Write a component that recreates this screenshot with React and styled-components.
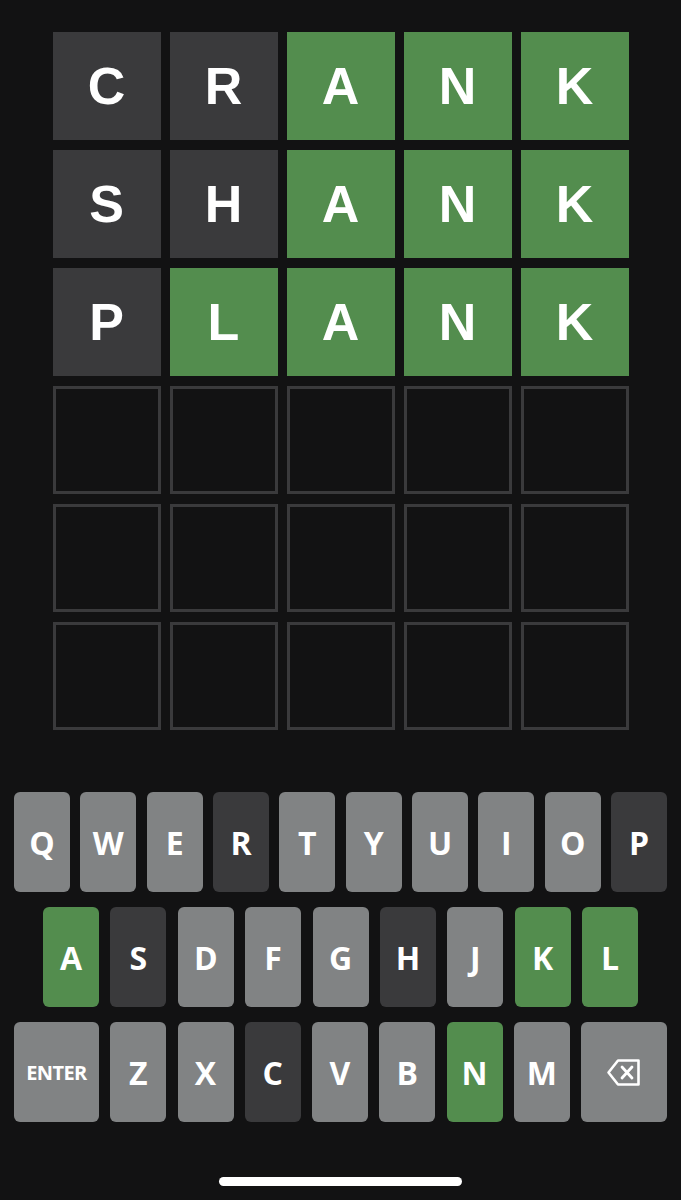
import React from "react";
import styled, { createGlobalStyle, css } from "styled-components";

const Global = createGlobalStyle`
  html, body { margin: 0; padding: 0; background: #121213; }
  body { font-family: "Liberation Sans", Arial, sans-serif; }
  * { box-sizing: border-box; }
`;

const COLORS = {
  correct: "#538d4e",
  absent: "#3a3a3c",
  unused: "#818384",
};

const Screen = styled.div`
  width: 681px;
  height: 1200px;
  background: #121213;
  display: flex;
  flex-direction: column;
  align-items: center;
  overflow: hidden;
`;

const Board = styled.div`
  margin-top: 32px;
  display: grid;
  grid-template-columns: repeat(5, 108px);
  grid-auto-rows: 108px;
  column-gap: 9px;
  row-gap: 10px;
`;

const Tile = styled.div`
  display: flex;
  align-items: center;
  justify-content: center;
  font-family: "Liberation Sans", Arial, sans-serif;
  font-weight: 700;
  font-size: 52px;
  color: #ffffff;
  background: ${(p) => (p.$state ? COLORS[p.$state] : "#121213")};
  ${(p) =>
    !p.$state &&
    css`
      border: 3px solid #3a3a3c;
    `}
`;

const Keyboard = styled.div`
  margin-top: 62px;
  width: 653px;
  display: flex;
  flex-direction: column;
  gap: 15px;
`;

const KeyRow = styled.div`
  display: flex;
  justify-content: space-between;
  padding: 0 ${(p) => p.$inset || 0}px;
`;

const Key = styled.div`
  width: ${(p) => (p.$wide ? p.$wide : 56)}px;
  height: 100px;
  border-radius: 6px;
  background: ${(p) => COLORS[p.$state || "unused"]};
  color: #ffffff;
  display: flex;
  align-items: center;
  justify-content: center;
  font-family: "Open Sans", "Liberation Sans", sans-serif;
  font-weight: 700;
  font-size: ${(p) => (p.$small ? "20px" : "32px")};
  letter-spacing: ${(p) => (p.$small ? "-0.6px" : "0")};
`;

const HomeBar = styled.div`
  margin-top: auto;
  margin-bottom: 14px;
  width: 243px;
  height: 9px;
  border-radius: 5px;
  background: #ffffff;
`;

const guesses = [
  ["CRANK", "aaccc"],
  ["SHANK", "aaccc"],
  ["PLANK", "acccc"],
];

const keyStates = {
  R: "absent", P: "absent", S: "absent", H: "absent", C: "absent",
  A: "correct", K: "correct", L: "correct", N: "correct",
};

const BackspaceIcon = () => (
  <svg width="36" height="29" viewBox="0 0 36 29" fill="none">
    <path
      d="M12 2.5 H32.5 V26.5 H12 L2.5 14.5 Z"
      stroke="#ffffff"
      strokeWidth="2.6"
      strokeLinejoin="round"
    />
    <path
      d="M16 9 L26 20 M26 9 L16 20"
      stroke="#ffffff"
      strokeWidth="2.8"
      strokeLinecap="round"
    />
  </svg>
);

export default function App() {
  const rows = [];
  for (let r = 0; r < 6; r++) {
    const g = guesses[r];
    for (let c = 0; c < 5; c++) {
      const state = g ? (g[1][c] === "c" ? "correct" : "absent") : null;
      rows.push(
        <Tile key={`${r}-${c}`} $state={state}>
          {g ? g[0][c] : ""}
        </Tile>
      );
    }
  }

  const renderKeys = (letters) =>
    letters.split("").map((l) => (
      <Key key={l} $state={keyStates[l]}>
        {l}
      </Key>
    ));

  return (
    <Screen>
      <Global />
      <Board>{rows}</Board>
      <Keyboard>
        <KeyRow>{renderKeys("QWERTYUIOP")}</KeyRow>
        <KeyRow $inset={29}>{renderKeys("ASDFGHJKL")}</KeyRow>
        <KeyRow>
          <Key $wide={85} $small>
            ENTER
          </Key>
          {renderKeys("ZXCVBNM")}
          <Key $wide={86}>
            <BackspaceIcon />
          </Key>
        </KeyRow>
      </Keyboard>
      <HomeBar />
    </Screen>
  );
}
